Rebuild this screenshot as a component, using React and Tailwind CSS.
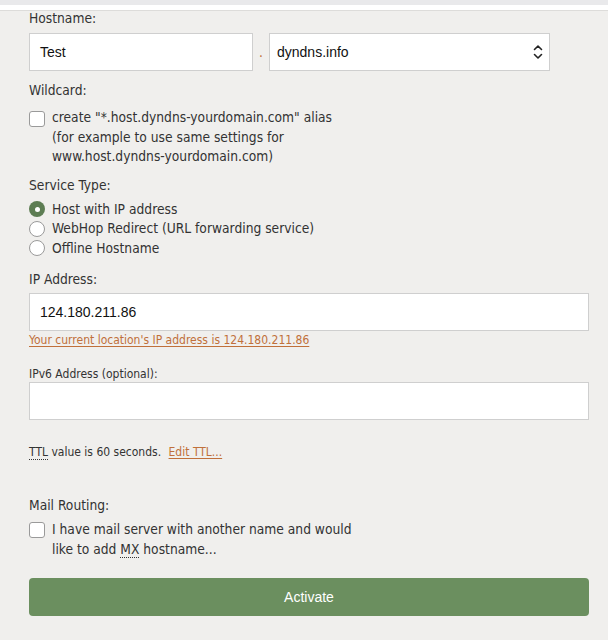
const body = { fontFamily: '"DejaVu Sans Condensed", "DejaVu Sans", sans-serif' };
const arial = { fontFamily: '"Liberation Sans", Arial, sans-serif' };

const Checkbox = () => (
  <span className="mt-[3px] h-4 w-4 shrink-0 rounded-[3px] border border-[#9a9a9a] bg-white" />
);

const Radio = ({ checked }) =>
  checked ? (
    <span className="flex h-4 w-4 shrink-0 items-center justify-center rounded-full bg-[#5d7d53]">
      <span className="h-[5px] w-[5px] rounded-full bg-white" />
    </span>
  ) : (
    <span className="h-4 w-4 shrink-0 rounded-full border border-[#9a9a9a] bg-white" />
  );

const UpDown = () => (
  <svg width="10" height="16" viewBox="0 0 10 16" fill="none" stroke="#222" strokeWidth="1.6" strokeLinecap="round" strokeLinejoin="round">
    <path d="M1.5 5.5 L5 2 L8.5 5.5" />
    <path d="M1.5 10.5 L5 14 L8.5 10.5" />
  </svg>
);

export default function App() {
  return (
    <div className="min-h-[640px] bg-[#f0efed] text-[#333] text-[13.7px]" style={body}>
      <div className="h-[5px] bg-[#e9e9eb]" />
      <div className="h-[5px] bg-white" />
      <div className="h-px bg-[#dddcda]" />

      <div className="px-[29px] pr-[19px]">
        {/* Hostname */}
        <div className="-mt-[2px] leading-[18px]">Hostname:</div>
        <div className="mt-[6px] flex items-center">
          <div className="flex h-[38px] w-[224px] items-center border border-[#cfcfcf] bg-white px-[10px] text-[14px] text-[#111]" style={arial}>
            Test
          </div>
          <span className="w-[16px] text-center text-[#c0703b]">.</span>
          <div className="flex h-[38px] w-[281px] items-center justify-between border border-[#cfcfcf] bg-white pl-[7px] pr-[6px] text-[14px] text-[#111]" style={arial}>
            dyndns.info
            <UpDown />
          </div>
        </div>

        {/* Wildcard */}
        <div className="mt-[10px] leading-[19px]">Wildcard:</div>
        <div className="mt-[8px] flex gap-[7px] leading-[19.5px]">
          <Checkbox />
          <div>
            create "*.host.dyndns-yourdomain.com" alias
            <br />
            (for example to use same settings for
            <br />
            www.host.dyndns-yourdomain.com)
          </div>
        </div>

        {/* Service Type */}
        <div className="mt-[9px] leading-[19px]">Service Type:</div>
        <div className="mt-[5px] flex flex-col leading-[19.5px]">
          <label className="flex items-center gap-[7px]">
            <Radio checked />
            Host with IP address
          </label>
          <label className="flex items-center gap-[7px]">
            <Radio />
            WebHop Redirect (URL forwarding service)
          </label>
          <label className="flex items-center gap-[7px]">
            <Radio />
            Offline Hostname
          </label>
        </div>

        {/* IP Address */}
        <div className="mt-[12px] leading-[19px]">IP Address:</div>
        <div className="mt-[4px] flex h-[38px] items-center border border-[#cfcfcf] bg-white px-[10px] text-[14px] text-[#111]" style={arial}>
          124.180.211.86
        </div>
        <a className="mt-[1px] block text-[12px] leading-[16px] text-[#c0703b] underline underline-offset-2">
          Your current location's IP address is 124.180.211.86
        </a>

        {/* IPv6 */}
        <div className="mt-[19px] text-[12px] leading-[15px]">IPv6 Address (optional):</div>
        <div className="h-[38px] border border-[#cfcfcf] bg-white" />

        {/* TTL */}
        <div className="mt-[24px] text-[12px] leading-[16px]">
          <abbr className="no-underline border-b border-dotted border-[#333]">TTL</abbr> value is 60 seconds.{" "}
          <a className="ml-[4px] text-[#c0703b] underline underline-offset-2">Edit TTL...</a>
        </div>

        {/* Mail Routing */}
        <div className="mt-[36px] leading-[19px]">Mail Routing:</div>
        <div className="mt-[4px] flex gap-[7px] leading-[20px]">
          <Checkbox />
          <div>
            I have mail server with another name and would
            <br />
            like to add <abbr className="no-underline border-b border-dotted border-[#333]">MX</abbr> hostname...
          </div>
        </div>

        <button className="mt-[19px] flex h-[38px] w-full items-center justify-center rounded-[4px] bg-[#6b8f5f] text-[14px] text-white" style={arial}>
          Activate
        </button>
      </div>
    </div>
  );
}
